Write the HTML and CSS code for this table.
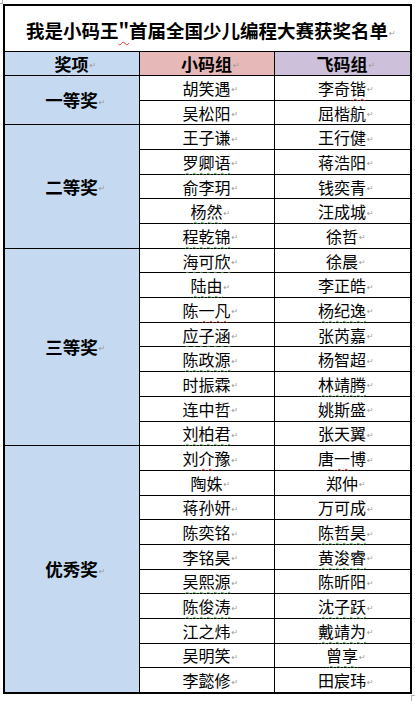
FILE: index.html
```html
<!DOCTYPE html>
<html lang="zh-CN">
<head>
<meta charset="utf-8">
<title>获奖名单</title>
<link rel="stylesheet" href="styles.css">
</head>
<body>
<div class="sheet">
  <div class="cell title"><span class="t">我是小码王<span class="red">"</span>首届全国少儿编程大赛获奖名单</span><span class="pm">↵</span></div>
  <div class="cell head c1"><span class="t">奖项</span><span class="pm">↵</span></div>
  <div class="cell head c2"><span class="t">小码组</span><span class="pm">↵</span></div>
  <div class="cell head c3"><span class="t">飞码组</span><span class="pm">↵</span></div>

  <div class="cell award r2"><span class="t">一等奖</span><span class="pm">↵</span></div>
  <div class="cell name"><span class="t">胡笑遇</span><span class="pm">↵</span></div>
  <div class="cell name"><span class="t">李奇<span class="red">锴</span></span><span class="pm">↵</span></div>
  <div class="cell name"><span class="t">吴松阳</span><span class="pm">↵</span></div>
  <div class="cell name"><span class="t">屈楷航</span><span class="pm">↵</span></div>

  <div class="cell award r5"><span class="t">二等奖</span><span class="pm">↵</span></div>
  <div class="cell name"><span class="t">王子谦</span><span class="pm">↵</span></div>
  <div class="cell name"><span class="t">王行健</span><span class="pm">↵</span></div>
  <div class="cell name"><span class="t green">罗卿语</span><span class="pm">↵</span></div>
  <div class="cell name"><span class="t">蒋浩阳</span><span class="pm">↵</span></div>
  <div class="cell name"><span class="t">俞李玥</span><span class="pm">↵</span></div>
  <div class="cell name"><span class="t">钱奕青</span><span class="pm">↵</span></div>
  <div class="cell name"><span class="t green">杨然</span><span class="pm">↵</span></div>
  <div class="cell name"><span class="t">汪成城</span><span class="pm">↵</span></div>
  <div class="cell name"><span class="t green">程乾锦</span><span class="pm">↵</span></div>
  <div class="cell name"><span class="t">徐哲</span><span class="pm">↵</span></div>

  <div class="cell award r8"><span class="t">三等奖</span><span class="pm">↵</span></div>
  <div class="cell name"><span class="t green">海可欣</span><span class="pm">↵</span></div>
  <div class="cell name"><span class="t">徐晨</span><span class="pm">↵</span></div>
  <div class="cell name"><span class="t green">陆由</span><span class="pm">↵</span></div>
  <div class="cell name"><span class="t">李正皓</span><span class="pm">↵</span></div>
  <div class="cell name"><span class="t">陈<span class="red">一凡</span></span><span class="pm">↵</span></div>
  <div class="cell name"><span class="t green">杨纪逸</span><span class="pm">↵</span></div>
  <div class="cell name"><span class="t green">应子涵</span><span class="pm">↵</span></div>
  <div class="cell name"><span class="t">张芮嘉</span><span class="pm">↵</span></div>
  <div class="cell name"><span class="t green">陈政源</span><span class="pm">↵</span></div>
  <div class="cell name"><span class="t">杨智超</span><span class="pm">↵</span></div>
  <div class="cell name"><span class="t">时振霖</span><span class="pm">↵</span></div>
  <div class="cell name"><span class="t green">林靖腾</span><span class="pm">↵</span></div>
  <div class="cell name"><span class="t">连中哲</span><span class="pm">↵</span></div>
  <div class="cell name"><span class="t">姚斯盛</span><span class="pm">↵</span></div>
  <div class="cell name"><span class="t green">刘柏君</span><span class="pm">↵</span></div>
  <div class="cell name"><span class="t">张天翼</span><span class="pm">↵</span></div>

  <div class="cell award r10"><span class="t">优秀奖</span><span class="pm">↵</span></div>
  <div class="cell name"><span class="t">刘<span class="red">介</span>豫</span><span class="pm">↵</span></div>
  <div class="cell name"><span class="t">唐<span class="red">一</span>博</span><span class="pm">↵</span></div>
  <div class="cell name"><span class="t">陶姝</span><span class="pm">↵</span></div>
  <div class="cell name"><span class="t">郑仲</span><span class="pm">↵</span></div>
  <div class="cell name"><span class="t">蒋孙妍</span><span class="pm">↵</span></div>
  <div class="cell name"><span class="t">万可成</span><span class="pm">↵</span></div>
  <div class="cell name"><span class="t">陈奕铭</span><span class="pm">↵</span></div>
  <div class="cell name"><span class="t green">陈哲昊</span><span class="pm">↵</span></div>
  <div class="cell name"><span class="t">李铭昊</span><span class="pm">↵</span></div>
  <div class="cell name"><span class="t green">黄浚睿</span><span class="pm">↵</span></div>
  <div class="cell name"><span class="t green">吴熙源</span><span class="pm">↵</span></div>
  <div class="cell name"><span class="t">陈昕阳</span><span class="pm">↵</span></div>
  <div class="cell name"><span class="t green">陈俊涛</span><span class="pm">↵</span></div>
  <div class="cell name"><span class="t green">沈子跃</span><span class="pm">↵</span></div>
  <div class="cell name"><span class="t">江之炜</span><span class="pm">↵</span></div>
  <div class="cell name"><span class="t green">戴靖为</span><span class="pm">↵</span></div>
  <div class="cell name"><span class="t">吴明笑</span><span class="pm">↵</span></div>
  <div class="cell name"><span class="t green">曾享</span><span class="pm">↵</span></div>
  <div class="cell name"><span class="t">李懿修</span><span class="pm">↵</span></div>
  <div class="cell name"><span class="t">田宸玮</span><span class="pm">↵</span></div>
</div>
</body>
</html>
```

FILE: styles.css
```css
html, body {
  margin: 0;
  padding: 0;
  background: #ffffff;
}
body {
  position: relative;
  width: 415px;
  height: 701px;
  overflow: hidden;
  font-family: "Noto Sans CJK SC", "Liberation Sans", sans-serif;
  color: #000;
  padding-top: 4px;
  padding-left: 3px;
  box-sizing: border-box;
}
body::before {
  content: "";
  position: absolute;
  left: 0;
  top: 0;
  width: 2px;
  height: 3px;
  border-right: 1px solid #b0b0b0;
  border-bottom: 1px solid #b0b0b0;
}
body::after {
  content: "";
  position: absolute;
  left: 411px;
  top: 695px;
  width: 4px;
  height: 6px;
  border-left: 1px solid #b0b0b0;
  border-top: 1px solid #b0b0b0;
}
.sheet {
  box-sizing: border-box;
  width: 409px;
  height: 690px;
  border: 2px solid #000;
  background: #000;
  display: grid;
  grid-template-columns: 134px 134px 135px;
  grid-template-rows: 45px 23px repeat(25, 1fr);
  gap: 1px;
}
.cell {
  display: flex;
  align-items: center;
  justify-content: center;
  background: #fff;
  line-height: 1;
  white-space: nowrap;
}
.title {
  grid-column: 1 / span 3;
  font-size: 18.5px;
  font-weight: 700;
  padding-top: 3px;
  box-sizing: border-box;
}
.head {
  font-size: 17px;
  font-weight: 700;
}
.c1 { background: #c5d9f1; }
.c2 { background: #e6b9b8; }
.c3 { background: #ccc0da; }
.award {
  background: #c5d9f1;
  font-size: 17.5px;
  font-weight: 700;
  grid-column: 1;
}
.r2 { grid-row: span 2; }
.r5 { grid-row: span 5; }
.r8 { grid-row: span 8; }
.r10 { grid-row: span 10; }
.name {
  font-size: 16px;
  font-weight: 400;
}
.pm {
  font-family: "DejaVu Sans", sans-serif;
  font-size: 8px;
  font-weight: 400;
  color: #9a9a9a;
  width: 9px;
  margin-right: -9px;
  align-self: center;
  padding-top: 5px;
  padding-left: 1px;
}
.title .pm { padding-top: 7px; }
.green {
  text-decoration: underline wavy #4caf4c;
  text-decoration-thickness: 1px;
  text-underline-offset: 3px;
}
.red {
  text-decoration: underline wavy #e03030;
  text-decoration-thickness: 1px;
  text-underline-offset: 3px;
}
```
